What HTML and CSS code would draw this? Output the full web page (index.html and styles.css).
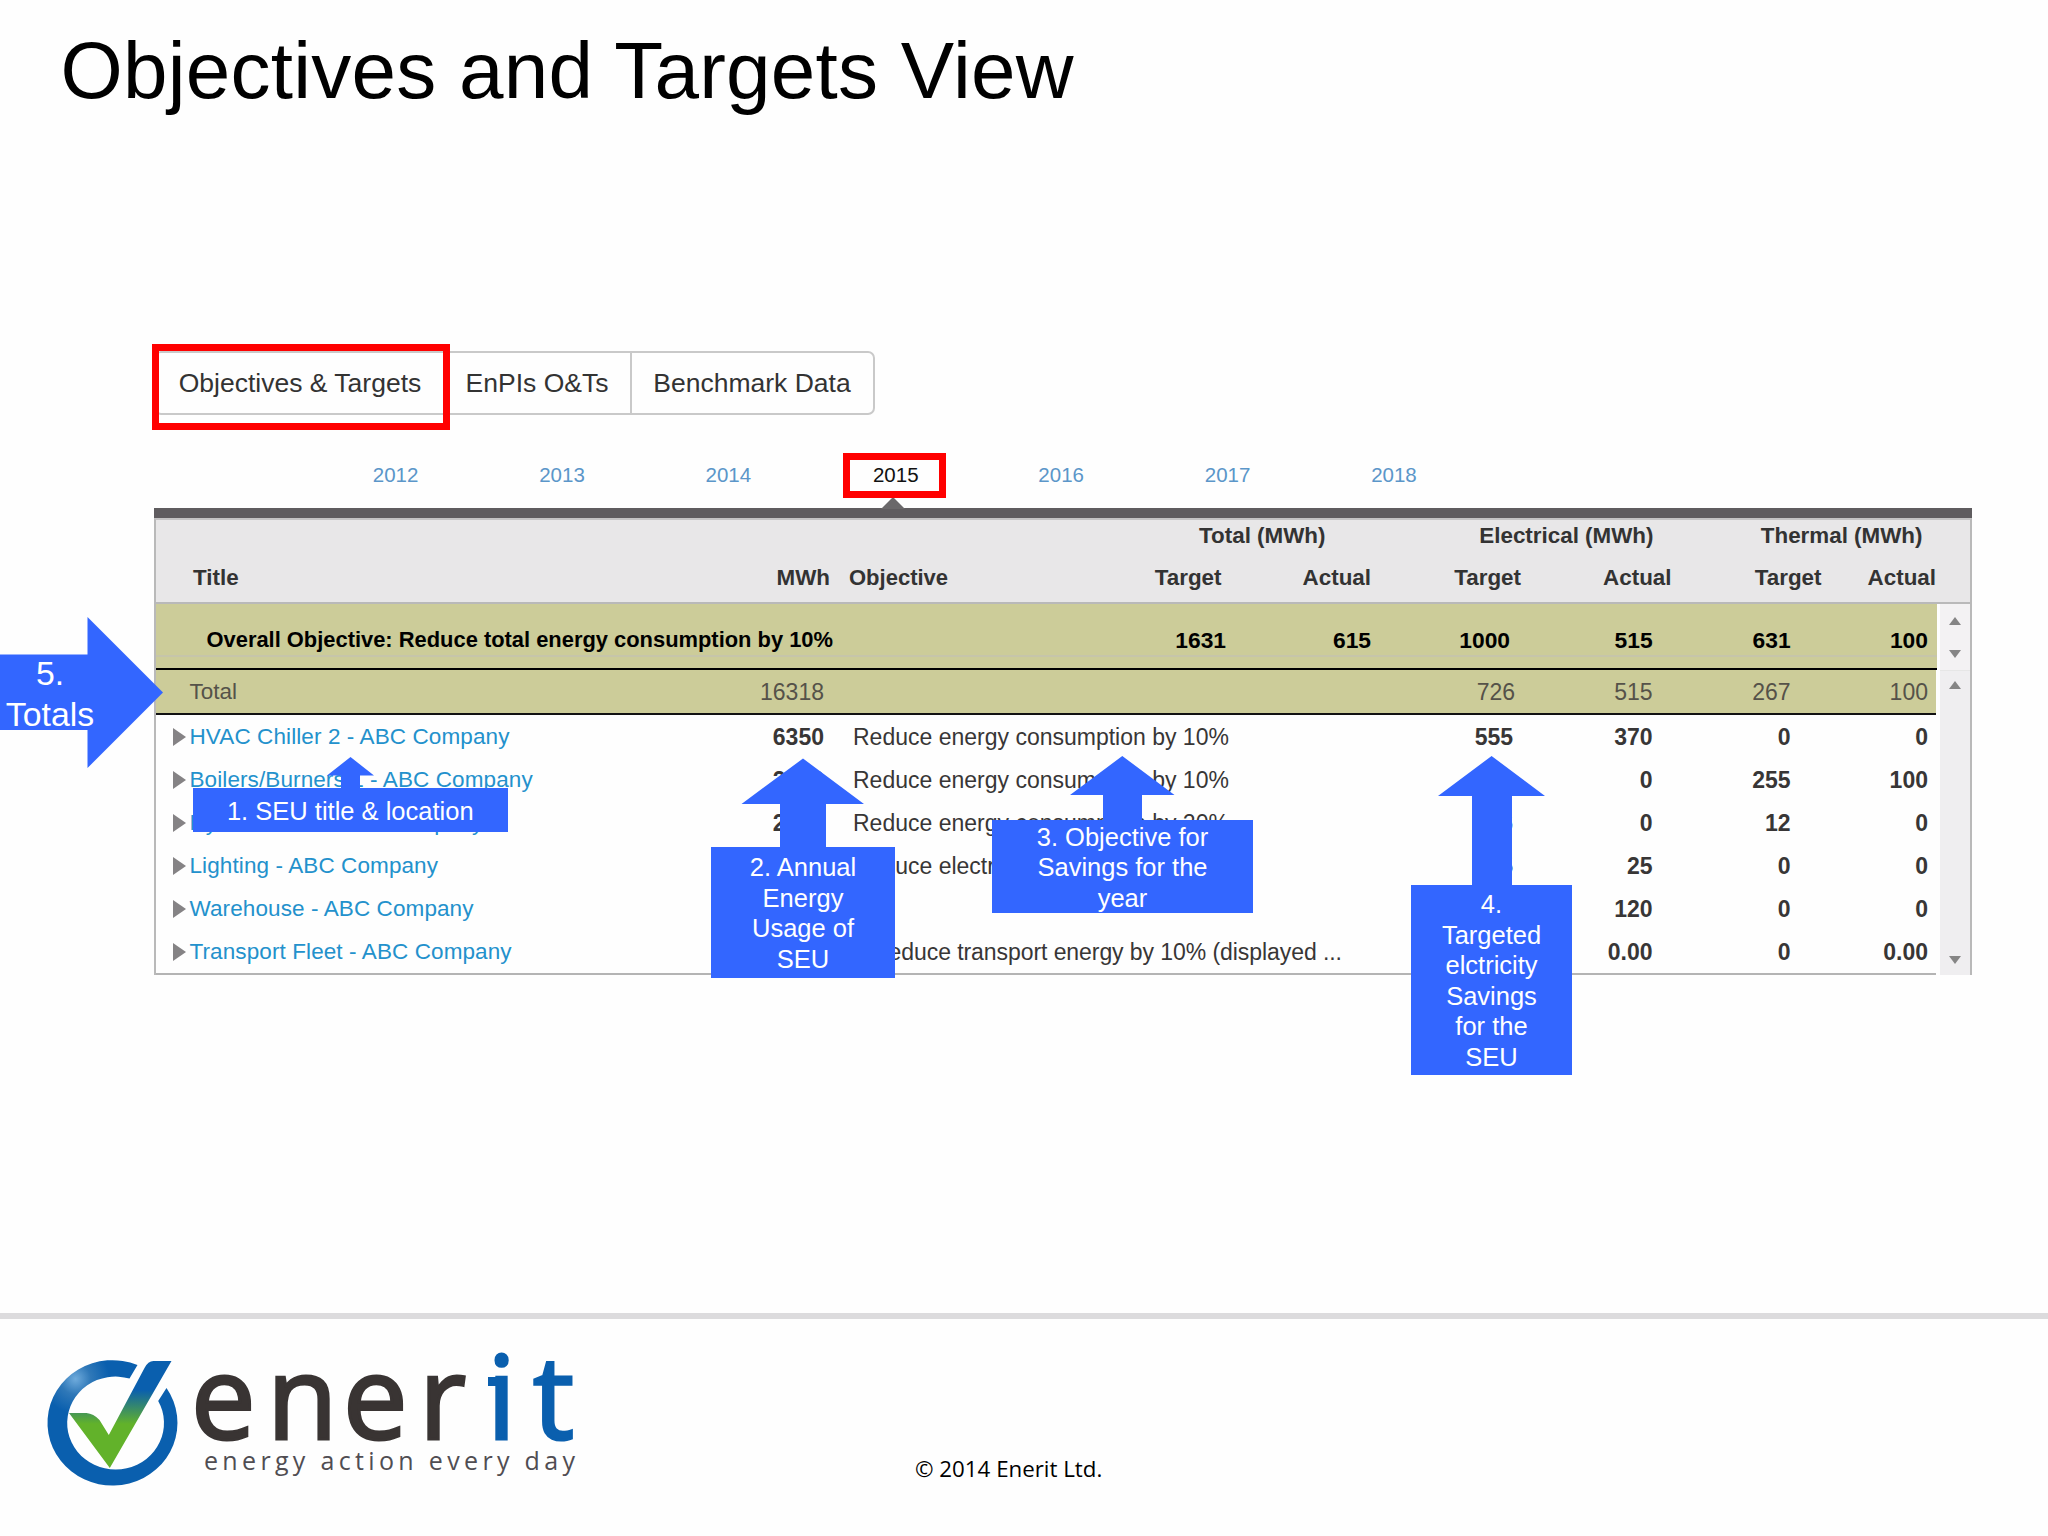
FILE: index.html
```html
<!DOCTYPE html>
<html lang="en">
<head>
<meta charset="utf-8">
<title>Objectives and Targets View</title>
<link rel="stylesheet" href="styles.css">
</head>
<body>
<div class="slide">
  <h1 class="slide-title">Objectives and Targets View</h1>

  <main class="content">
    <nav class="tabs">
      <a class="tab tab-active">Objectives &amp; Targets</a>
      <a class="tab tab-enpi">EnPIs O&amp;Ts</a>
      <a class="tab tab-bench">Benchmark Data</a>
    </nav>

    <nav class="years">
      <a>2012</a><a>2013</a><a>2014</a><a class="year-active"><span>2015</span></a><a>2016</a><a>2017</a><a>2018</a>
    </nav>

    <section class="panel">
      <header class="head">
        <div class="head-groups">
          <span>Total (MWh)</span><span>Electrical (MWh)</span><span>Thermal (MWh)</span>
        </div>
        <div class="head-labels">
          <span class="left">Title</span><span>MWh</span><span class="head-objective">Objective</span><span>Target</span><span>Actual</span><span>Target</span><span>Actual</span><span>Target</span><span>Actual</span>
        </div>
      </header>
      <div class="body">
        <div class="rows">
          <div class="row overall">
            <span class="name">Overall Objective: Reduce total energy consumption by 10%</span><span></span><span></span><span>1631</span><span>615</span><span>1000</span><span>515</span><span>631</span><span>100</span>
          </div>
          <div class="row total">
            <span class="name">Total</span><span>16318</span><span></span><span></span><span></span><span>726</span><span>515</span><span>267</span><span>100</span>
          </div>
          <div class="items">
            <div class="row item"><a class="name">HVAC Chiller 2 - ABC Company</a><span>6350</span><span class="objective">Reduce energy consumption by 10%</span><span></span><span></span><span>555</span><span>370</span><span>0</span><span>0</span></div>
            <div class="row item"><a class="name">Boilers/Burners 1 - ABC Company</a><span>2550</span><span class="objective">Reduce energy consumption by 10%</span><span></span><span></span><span>0</span><span>0</span><span>255</span><span>100</span></div>
            <div class="row item"><a class="name">Hydraulics 1 - ABC Company</a><span>2500</span><span class="objective">Reduce energy consumption by 20%</span><span></span><span></span><span>26</span><span>0</span><span>12</span><span>0</span></div>
            <div class="row item"><a class="name">Lighting - ABC Company</a><span></span><span class="objective">Reduce electricity usage by 10%</span><span></span><span></span><span>25</span><span>25</span><span>0</span><span>0</span></div>
            <div class="row item"><a class="name">Warehouse - ABC Company</a><span></span><span></span><span></span><span></span><span></span><span>120</span><span>0</span><span>0</span></div>
            <div class="row item"><a class="name">Transport Fleet - ABC Company</a><span></span><span class="objective objective-inset">Reduce transport energy by 10% (displayed ...</span><span></span><span></span><span></span><span>0.00</span><span>0</span><span>0.00</span></div>
          </div>
        </div>
        <div class="scrollbars">
          <div class="scroll scroll-top"><i class="up"></i><i class="down"></i></div>
          <div class="scroll scroll-main"><i class="up"></i><i class="down"></i></div>
        </div>
      </div>
    </section>
  </main>

  <footer class="footer">
    <svg class="logo" width="560" height="160" viewBox="30 1340 560 160" role="img" aria-label="enerit">
      <defs>
        <linearGradient id="tick" gradientUnits="userSpaceOnUse" x1="0" y1="1390" x2="0" y2="1424">
          <stop offset="0" stop-color="#0a5fae"/><stop offset="1" stop-color="#62b22a"/>
        </linearGradient>
        <radialGradient id="shine" gradientUnits="userSpaceOnUse" cx="74" cy="1379" r="34">
          <stop offset="0" stop-color="#6fabdc"/><stop offset=".45" stop-color="#2f78b8"/><stop offset="1" stop-color="#0a5fae"/>
        </radialGradient>
      </defs>
      <g transform="translate(1.500 1)">
        <path fill="url(#shine)" d="M136 1365 A65 62.700 0 1 0 165 1388 L156.700 1401 A48.400 46.500 0 1 1 128 1378.500 Z"/>
        <path fill="url(#tick)" d="M67.500 1413 L85 1413 Q92 1413.500 98 1420 L107.300 1435 L143 1368 Q146.500 1361 152 1361 L170 1361 L108.300 1468 Z"/>
      </g>
      <g class="wordmark">
        <text x="191 267 343 419" y="1440">ener</text>
        <text class="wordmark-blue" x="487 533" y="1440">it</text>
      </g>
      <rect x="488" y="1378" width="12" height="9" fill="#0a5fae"/>
      <text class="tagline" x="204" y="1471" textLength="371">energy action every day</text>
    </svg>
    <p class="copyright">© 2014 Enerit Ltd.</p>
  </footer>

  <div class="mark mark-tab"></div>
  <div class="mark mark-year"></div>

  <svg class="shapes" width="2048" height="1536" viewBox="0 0 2048 1536" aria-hidden="true">
    <path d="M350.500 757 L374 775.500 H360 V789 H341 V775.500 H327 Z"/>
    <path d="M803 758.500 L864 804 H826 V848 H780 V804 H741.500 Z"/>
    <path d="M1122.300 756 L1174.500 795 H1142 V821 H1103 V795 H1070 Z"/>
    <path d="M1491.600 756 L1545 796 H1512 V886 H1472 V796 H1438 Z"/>
    <path d="M0 654.500 H87.500 V617 L163 692.500 L87.500 768 V730 H0 Z"/>
  </svg>
  <div class="callout callout-title">1. SEU title &amp; location</div>
  <div class="callout callout-usage">2. Annual<br>Energy<br>Usage of<br>SEU</div>
  <div class="callout callout-objective">3. Objective for<br>Savings for the<br>year</div>
  <div class="callout callout-target">4.<br>Targeted<br>elctricity<br>Savings<br>for the<br>SEU</div>
  <div class="callout callout-totals">5.<br>Totals</div>
</div>
</body>
</html>
```

FILE: styles.css
```css
* { box-sizing: border-box; }

body {
  margin: 0;
  background: #fefefe;
  font-family: "Liberation Sans", Arial, sans-serif;
  color: #333;
}

.slide {
  position: relative;
  width: 2048px;
  height: 1536px;
  overflow: hidden;
  display: flex;
  flex-direction: column;
}

.slide-title {
  margin: 21px 0 0 60.500px;
  font-size: 80px;
  font-weight: 400;
  line-height: 100px;
  letter-spacing: 0.250px;
  color: #000;
}

.content {
  flex: 1;
  padding: 230px 0 0 154px;
}

/* View tabs */
.tabs {
  display: flex;
  width: 721px;
  height: 64px;
  border: 2px solid #c9c9c9;
  border-radius: 7px;
}

.tab {
  display: flex;
  align-items: center;
  justify-content: center;
  font-size: 26.500px;
  line-height: 60px;
  white-space: nowrap;
}

.tab-active { width: 288px; }
.tab-enpi { width: 186px; }
.tab-bench { flex: 1; padding-right: 1px; border-left: 2px solid #c9c9c9; }

/* Year picker */
.years {
  display: grid;
  grid-template-columns: repeat(7, 166.400px);
  margin: 37px 0 0 158.400px;
  height: 56px;
  font-size: 20.500px;
  line-height: 46px;
  text-align: center;
  color: #5b96c9;
}

.year-active { position: relative; color: #111; }
.year-active span { padding-left: 2px; }

.year-active::after {
  content: "";
  position: absolute;
  left: 69px;
  bottom: -1px;
  border: 12px solid transparent;
  border-top: 0;
  border-bottom: 12px solid #6a686a;
}

/* Table */
.panel {
  width: 1817.500px;
  border-top: 10px solid #5f5c5f;
}

.head {
  height: 86px;
  padding-top: 3px;
  border: 2px solid #b9b9b9;
  border-top-color: #c4c3c4;
  background: #e8e7e8;
  font-size: 22.400px;
  font-weight: 700;
}

.head-groups {
  display: grid;
  grid-template-columns: 1169.500px 328px 269px;
  line-height: 25px;
  text-align: right;
}

.head-labels {
  display: grid;
  grid-template-columns: 473px 201px 199px 192.500px 149.500px 150px 150.500px 150px 114.500px;
  padding-top: 3px;
  line-height: 53px;
  text-align: right;
}

.head-labels .left { padding-left: 37px; text-align: left; }
.head-labels .head-objective { padding-left: 19px; font-size: 22px; text-align: left; }

.body { display: flex; height: 371px; }

.rows {
  width: 1783px;
  border-left: 2px solid #b9b9b9;
}

.row {
  display: grid;
  grid-template-columns: 584px 84px 276px 126px 145px 142px 139.600px 138px 137.400px;
  text-align: right;
  white-space: nowrap;
}

.name { text-align: left; padding-left: 33.500px; }

.overall {
  height: 66px;
  padding-top: 7px;
  background: linear-gradient(#c6c5aa, #c6c5aa) 0 51px / 100% 2px no-repeat #cccc99;
  border-bottom: 2px solid #000;
  font-size: 22.800px;
  font-weight: 700;
  line-height: 58px;
  color: #000;
}

.overall .name { padding-left: 50.500px; font-size: 21.900px; }
.overall span:nth-child(6) { padding-right: 3px; }

.total {
  width: 1780px;
  height: 45px;
  background: #cccc99;
  border-bottom: 2px solid #111;
  font-size: 23px;
  line-height: 44px;
  color: #555249;
}

.total span:nth-child(6) { padding-right: 0; margin-right: -2px; }
.total .name { font-size: 22.500px; }

.items {
  width: 1780px;
  height: 260px;
  border-bottom: 2px solid #b4b4b4;
}

.item {
  height: 43px;
  font-size: 23px;
  font-weight: 700;
  line-height: 44px;
  color: #383636;
}

.item .name {
  position: relative;
  font-size: 22.500px;
  font-weight: 400;
  letter-spacing: 0.100px;
  color: #2391cc;
}

.item .name::before {
  content: "";
  position: absolute;
  left: 17px;
  top: 13px;
  border: 9px solid transparent;
  border-left: 13px solid #858385;
  border-right: 0;
}

.objective { padding-left: 29px; font-weight: 400; text-align: left; }
.objective-inset { padding-left: 48px; letter-spacing: -0.070px; }

/* Scrollbars */
.scrollbars {
  width: 34.500px;
  padding-left: 3px;
  border-right: 2px solid #b9b9b9;
  display: flex;
  flex-direction: column;
}

.scroll {
  display: flex;
  flex-direction: column;
  align-items: center;
  justify-content: space-between;
  background: #efeef0;
}

.scroll-top { height: 66px; padding: 13px 0 12px; background: #f3f2f3; }
.scroll-main { flex: 1; padding: 10px 0 11px; border-top: 1px solid #e6e6e6; }

.up, .down { border: 6.500px solid transparent; }
.up { border-top: 0; border-bottom: 8px solid #858585; }
.down { border-bottom: 0; border-top: 8px solid #858585; }

/* Footer */
.footer {
  display: flex;
  height: 223px;
  padding: 20px 0 0 30px;
  border-top: 6.500px solid #dcdbdd;
}

.logo { flex: none; overflow: visible; }

.wordmark {
  font-family: "Open Sans", sans-serif;
  font-size: 115px;
  fill: #393433;
  stroke: #393433;
  stroke-width: 3px;
}

.wordmark-blue { fill: #0a5fae; stroke: #0a5fae; }

.tagline {
  font-family: "Open Sans", sans-serif;
  font-size: 25px;
  fill: #504d52;
}

.copyright {
  margin: 114px 0 0 325px;
  font-family: "Open Sans", sans-serif;
  font-size: 22.300px;
  line-height: 32px;
  color: #000;
}

/* Annotations laid over the screen */
.mark { position: absolute; border: 7px solid #f00; }
.mark-tab { left: 152px; top: 344px; width: 298px; height: 86px; }
.mark-year { left: 843px; top: 452.500px; width: 103px; height: 45px; }

.shapes { position: absolute; left: 0; top: 0; fill: #3366ff; }

.callout {
  position: absolute;
  display: grid;
  align-content: center;
  padding-top: 2px;
  background: #3366ff;
  color: #fff;
  font-size: 25.500px;
  line-height: 30.600px;
  text-align: center;
  white-space: nowrap;
}

.callout-title { left: 193px; top: 788px; width: 314.500px; height: 44px; }
.callout-usage { left: 711px; top: 847px; width: 184px; height: 130.500px; }
.callout-objective { left: 992px; top: 820px; width: 261px; height: 93px; }
.callout-target { left: 1411px; top: 885px; width: 161px; height: 189.500px; }

.callout-totals {
  left: 0;
  top: 655px;
  width: 100px;
  height: 76px;
  background: none;
  font-size: 33.800px;
  line-height: 40.600px;
}
```
